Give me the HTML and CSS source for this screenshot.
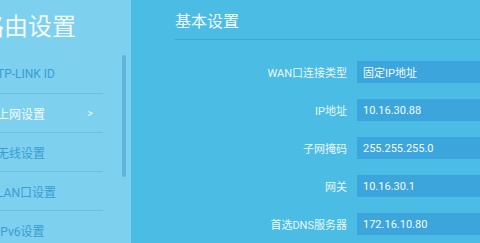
FILE: index.html
```html
<!DOCTYPE html>
<html lang="zh">
<head>
<meta charset="utf-8">
<link rel="stylesheet" href="styles.css">
</head>
<body>
<div class="screen">
  <aside class="side">
    <h1 class="side-title">路由设置</h1>
    <ul class="menu">
      <li class="menu-item">TP-LINK ID</li>
      <li class="menu-item active">上网设置<span class="chev">&gt;</span></li>
      <li class="menu-item">无线设置</li>
      <li class="menu-item">LAN口设置</li>
      <li class="menu-item">IPv6设置</li>
    </ul>
    <div class="scrollbar"></div>
  </aside>
  <main class="content">
    <h2 class="content-title">基本设置</h2>
    <div class="form">
      <label class="lbl">WAN口连接类型</label><div class="field">固定IP地址</div>
      <label class="lbl">IP地址</label><div class="field">10.16.30.88</div>
      <label class="lbl">子网掩码</label><div class="field">255.255.255.0</div>
      <label class="lbl">网关</label><div class="field">10.16.30.1</div>
      <label class="lbl">首选DNS服务器</label><div class="field">172.16.10.80</div>
    </div>
  </main>
</div>
</body>
</html>
```
FILE: styles.css
```css
* { box-sizing: border-box; }
html, body {
  margin: 0;
  padding: 0;
  width: 480px;
  height: 243px;
  overflow: hidden;
}
body {
  font-family: Roboto, "Noto Sans CJK SC", sans-serif;
  background: #4bbce3;
}
.screen {
  display: flex;
  width: 480px;
  height: 243px;
}
.side {
  position: relative;
  width: 131px;
  flex: none;
  background: #7dd0ee;
  overflow: hidden;
}
.side-title {
  margin: 0 0 0 -20px;
  height: 55px;
  line-height: 55px;
  font-size: 24px;
  font-weight: 400;
  color: #f2fbfe;
  white-space: nowrap;
}
.menu {
  list-style: none;
  margin: 0 0 0 -3px;
  padding: 0;
  width: 106px;
}
.menu-item {
  display: flex;
  align-items: center;
  justify-content: space-between;
  height: 39px;
  border-bottom: 1px solid #6cc2e5;
  font-size: 12px;
  color: #3a9ed4;
  white-space: nowrap;
}
.menu-item.active {
  color: #f4fbfe;
}
.chev {
  margin-right: 10px;
  font-size: 11px;
  color: #f4fbfe;
}
.scrollbar {
  position: absolute;
  left: 122px;
  top: 55px;
  width: 4px;
  height: 122px;
  background: #5fb5dc;
  border-radius: 2px;
}
.content {
  flex: 1;
  min-width: 0;
  overflow: hidden;
}
.content-title {
  margin: 0 0 0 44px;
  height: 40px;
  line-height: 44px;
  font-size: 16px;
  font-weight: 400;
  color: #f0fafe;
  border-bottom: 1px solid #3fa9d6;
  white-space: nowrap;
}
.form {
  display: grid;
  grid-template-columns: 216px 140px;
  grid-auto-rows: 22px;
  column-gap: 10px;
  row-gap: 16px;
  margin-top: 21px;
}
.lbl {
  display: flex;
  align-items: center;
  justify-content: flex-end;
  font-size: 11px;
  color: #eaf7fc;
  white-space: nowrap;
}
.field {
  display: flex;
  align-items: center;
  padding-left: 6px;
  background: #3ba5dc;
  font-size: 11px;
  color: #f4fbfe;
  white-space: nowrap;
}
```
